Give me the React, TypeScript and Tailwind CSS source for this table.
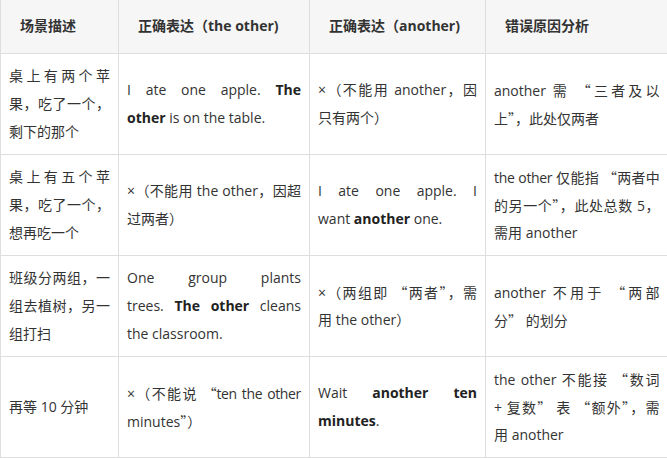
import type { ReactNode } from "react";

type Lines = ReactNode[];

const b = (t: string) => <strong className="font-bold text-[#222]">{t}</strong>;

// curly quotes are full-width in the CJK face, like in the screenshot
function quotes(s: string) {
  return s.split(/([“”])/).map((part, i) =>
    part === "“" || part === "”" ? (
      <span key={i} className="font-['Noto_Sans_CJK_SC',sans-serif]">
        {part}
      </span>
    ) : (
      part
    )
  );
}

// a line that is a hair too wide in Open Sans
const tight = (s: string) => <span className="tracking-[-0.35px]">{quotes(s)}</span>;

const HEADERS = ["场景描述", "正确表达（the other)", "正确表达（another)", "错误原因分析"];

const ROWS: Lines[][] = [
  [
    ["桌上有两个苹", "果，吃了一个，", "剩下的那个"],
    [<>I ate one apple. {b("The")}</>, <>{b("other")} is on the table.</>],
    ["×（不能用 another，因", "只有两个）"],
    ["another 需 “三者及以", "上”，此处仅两者"],
  ],
  [
    ["桌上有五个苹", "果，吃了一个，", "想再吃一个"],
    ["×（不能用 the other，因超", "过两者）"],
    ["I ate one apple. I", <>want {b("another")} one.</>],
    [tight("the other 仅能指 “两者中"), "的另一个”，此处总数 5，", "需用 another"],
  ],
  [
    ["班级分两组，一", "组去植树，另一", "组打扫"],
    ["One group plants", <>trees. {b("The other")} cleans</>, "the classroom."],
    ["×（两组即 “两者”，需", "用 the other）"],
    ["another 不用于 “两部", "分” 的划分"],
  ],
  [
    ["再等 10 分钟"],
    [tight("×（不能说 “ten the other"), "minutes”）"],
    [<>Wait {b("another ten")}</>, <>{b("minutes")}.</>],
    ["the other 不能接 “数词", "+ 复数” 表 “额外”，需", "用 another"],
  ],
];

function Cell({ lines, last }: { lines: Lines; last: boolean }) {
  return (
    <td
      className={`border border-[#dedede] px-2 py-2 align-middle ${last ? "border-r-0" : ""}`}
    >
      {lines.map((line, i) => (
        <div
          key={i}
          className={`h-[28px] ${
            i < lines.length - 1 ? "text-justify [text-align-last:justify]" : ""
          }`}
        >
          {typeof line === "string" ? quotes(line) : line}
        </div>
      ))}
    </td>
  );
}

export default function App() {
  return (
    <div
      lang="zh-CN"
      className="h-[458px] w-[667px] overflow-hidden bg-white font-['Open_Sans','Noto_Sans_CJK_SC',sans-serif] text-[14px] leading-[28px] text-[#333]"
    >
      <table className="w-[667px] table-fixed border-collapse">
        <colgroup>
          <col className="w-[118px]" />
          <col className="w-[191px]" />
          <col className="w-[176px]" />
          <col className="w-[182px]" />
        </colgroup>
        <thead>
          <tr className="bg-[#f6f6f6]">
            {HEADERS.map((h, i) => (
              <th
                key={h}
                className={`h-[53px] border border-t-0 border-[#dedede] py-0 pl-[19px] pr-2 text-left font-bold text-[#333] ${
                  i === HEADERS.length - 1 ? "border-r-0" : ""
                }`}
              >
                {h}
              </th>
            ))}
          </tr>
        </thead>
        <tbody>
          {ROWS.map((row, r) => (
            <tr key={r}>
              {row.map((lines, c) => (
                <Cell key={c} lines={lines} last={c === row.length - 1} />
              ))}
            </tr>
          ))}
        </tbody>
      </table>
    </div>
  );
}
